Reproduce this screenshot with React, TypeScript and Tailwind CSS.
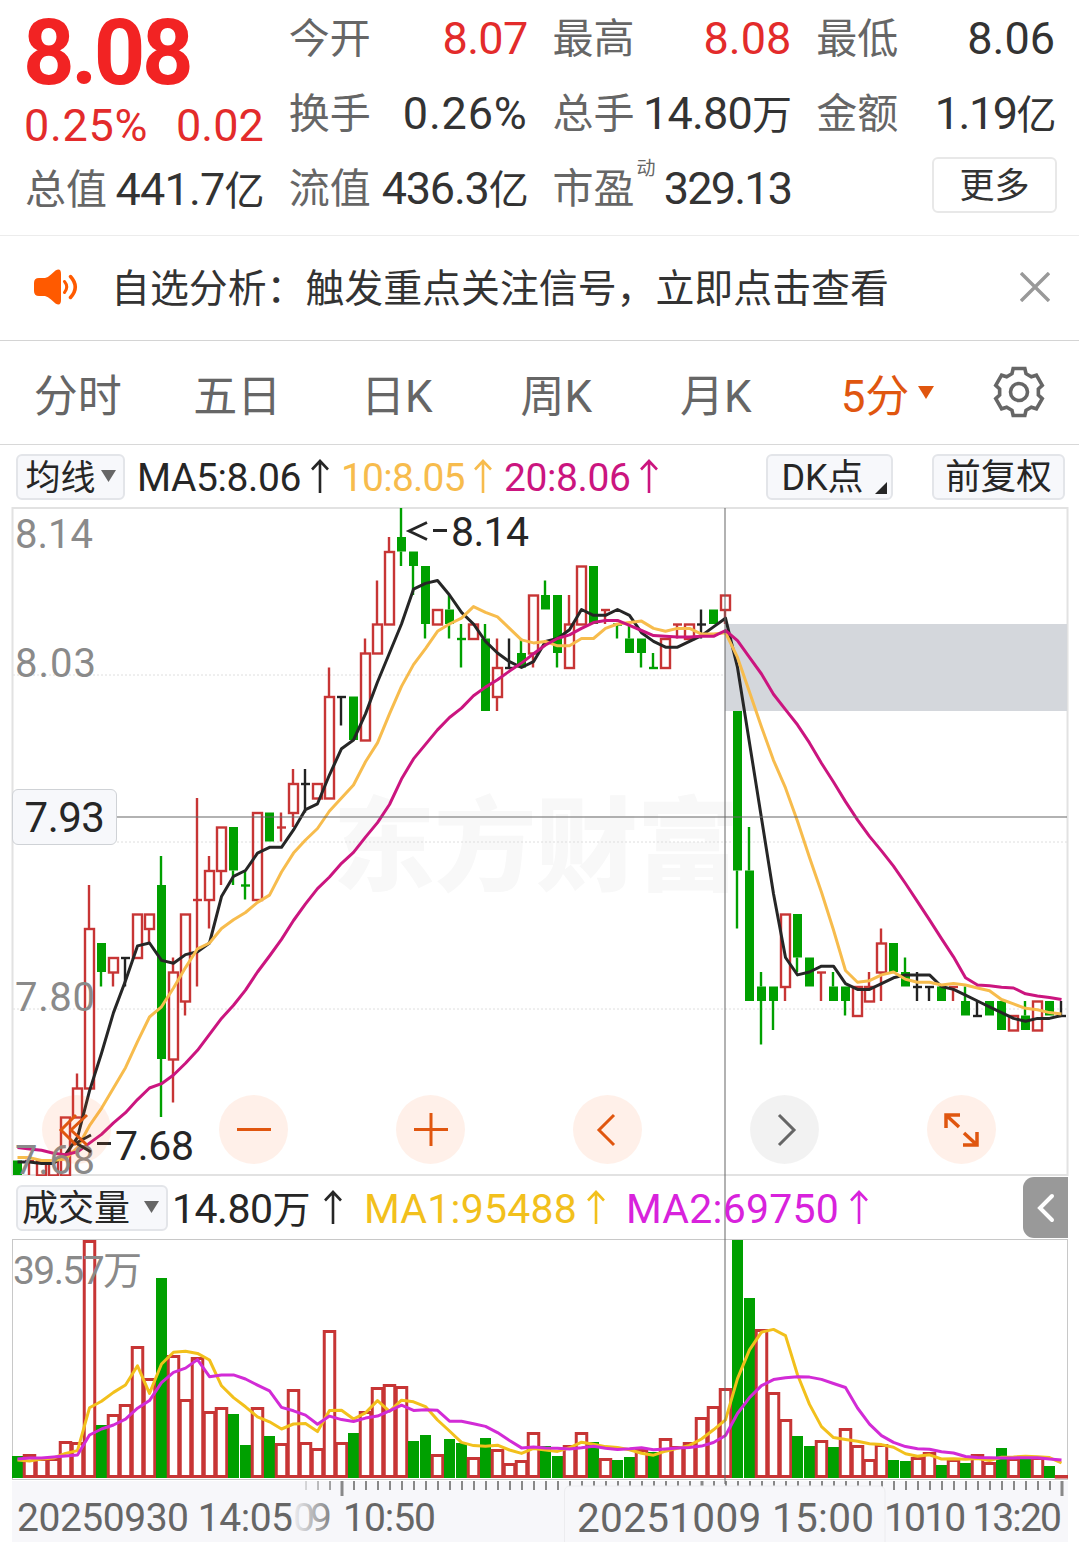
import type { ReactNode } from "react";
import clsx from "clsx";

type Tone = "r" | "g" | "k";
// [tone, high, body top, body bottom, low], counted in ticks of 0.01 below 8.14
type Candle = [Tone, number, number, number, number];

const candles: Candle[] = [
  ["g", 45, 45, 46, 46], ["r", 45, 45, 45, 46], ["r", 45, 45, 46, 46], ["r", 45, 45, 46, 46],
  ["r", 42, 42, 46, 46], ["r", 39, 40, 42, 42], ["r", 26, 29, 40, 40], ["g", 30, 30, 32, 33],
  ["r", 31, 31, 32, 33], ["k", 31, 31, 31, 33], ["r", 28, 28, 31, 31], ["r", 28, 28, 29, 30],
  ["g", 24, 26, 38, 42], ["r", 31, 32, 38, 41], ["r", 28, 28, 34, 35], ["r", 20, 27, 27, 33],
  ["r", 24, 25, 27, 29], ["r", 22, 22, 25, 26], ["g", 22, 22, 25, 26], ["g", 25, 26, 26, 27],
  ["r", 21, 21, 27, 27], ["g", 21, 21, 23, 23], ["r", 21, 22, 22, 23], ["r", 18, 19, 21, 22],
  ["k", 18, 19, 19, 21], ["r", 19, 19, 20, 20], ["r", 11, 13, 20, 20], ["k", 13, 13, 13, 15],
  ["g", 13, 13, 16, 16], ["r", 9, 10, 16, 16], ["r", 5, 8, 10, 10], ["r", 2, 3, 8, 8],
  ["g", 0, 2, 3, 4], ["g", 3, 3, 4, 6], ["g", 4, 4, 8, 9], ["r", 7, 7, 8, 8],
  ["g", 6, 7, 8, 9], ["g", 8, 9, 9, 11], ["r", 8, 8, 9, 9], ["g", 8, 9, 14, 14],
  ["r", 9, 11, 13, 14], ["k", 9, 11, 11, 11], ["g", 9, 10, 11, 11], ["r", 6, 6, 10, 11],
  ["g", 5, 6, 7, 7], ["g", 6, 6, 10, 11], ["r", 6, 8, 11, 11], ["r", 4, 4, 8, 8],
  ["g", 4, 4, 8, 8], ["r", 7, 7, 7, 8], ["g", 8, 8, 8, 9], ["g", 8, 9, 10, 10],
  ["g", 9, 9, 10, 11], ["g", 10, 11, 11, 11], ["r", 9, 9, 11, 11], ["r", 8, 8, 8, 9],
  ["r", 8, 8, 9, 9], ["k", 7, 8, 8, 9], ["g", 7, 7, 8, 8], ["r", 6, 6, 7, 8],
  ["g", 14, 14, 25, 29], ["g", 22, 25, 34, 34], ["g", 32, 33, 34, 37], ["g", 33, 33, 34, 36],
  ["r", 28, 28, 33, 34], ["g", 28, 28, 31, 32], ["g", 31, 31, 33, 33], ["r", 32, 32, 32, 34],
  ["g", 32, 33, 34, 34], ["g", 33, 33, 34, 35], ["r", 33, 33, 35, 35], ["r", 32, 33, 34, 34],
  ["r", 29, 30, 32, 34], ["g", 30, 30, 32, 32], ["g", 31, 32, 33, 33], ["k", 32, 33, 33, 34],
  ["k", 33, 33, 33, 34], ["g", 33, 33, 34, 34], ["r", 33, 33, 33, 34], ["g", 33, 34, 35, 35],
  ["k", 34, 35, 35, 35], ["g", 34, 34, 35, 35], ["g", 34, 34, 36, 36], ["r", 35, 35, 36, 36],
  ["g", 34, 35, 36, 36], ["r", 34, 34, 36, 36], ["g", 34, 34, 35, 35], ["k", 34, 35, 35, 35],
];

const volumes = [
  22, 24, 20, 20, 37, 36, 238, 53, 64, 74,
  132, 100, 200, 123, 79, 121, 67, 71, 64, 33,
  71, 42, 35, 89, 36, 30, 148, 36, 45, 67,
  91, 94, 92, 37, 43, 24, 39, 35, 21, 40,
  29, 15, 18, 46, 32, 22, 33, 46, 36, 20,
  18, 21, 29, 26, 40, 32, 36, 61, 72, 90,
  238, 180, 149, 86, 59, 42, 32, 38, 31, 50,
  33, 19, 34, 18, 17, 21, 26, 13, 19, 15,
  24, 16, 30, 20, 19, 21, 12, 3,
];

const fallingVolumes = new Set([
  0, 7, 12, 18, 19, 21, 28, 33, 34, 36, 37, 39, 44, 45, 48, 50, 51, 53,
  60, 61, 65, 66, 68, 73, 74, 77, 79, 82, 84, 86,
]);

const TONES: Record<Tone, string> = { r: "#c73535", g: "#00a000", k: "#222222" };

const xOf = (i: number) => 17 + i * 12;
const yOf = (tick: number) => tick * 14.5;

// the first bars need history that is not on screen, so their averages are given
function movingAverage(values: number[], period: number, head: number[]) {
  return values.map((_, i) => {
    if (i < head.length) return head[i];
    const part = values.slice(i - period + 1, i + 1);
    return part.reduce((a, b) => a + b, 0) / period;
  });
}

function toPoints(values: number[], y: (v: number) => number) {
  return values.map((v, i) => `${xOf(i) + 0.5},${y(v).toFixed(1)}`).join(" ");
}

const closes = candles.map(([tone, , top, bottom]) => (tone === "g" ? bottom : top));
const ma5 = movingAverage(closes, 5, [45.1, 45.1, 45.2, 45.2]);
const ma10 = movingAverage(closes, 10, [44.8, 44.8, 45, 45, 44.9, 44.1, 42.6, 41.4, 40]);
const ma20 = movingAverage(closes, 20, [
  44.1, 44.2, 44.3, 44.5, 44.6, 44.4, 43.8, 43.2, 42.4, 41.7, 40.8, 40, 39.7, 39.1, 38.3, 37.4, 36.3, 35.2, 34.3,
]);
const volMa5 = movingAverage(volumes, 5, [18, 17, 19, 20]);
const volMa10 = movingAverage(volumes, 10, [19, 20, 20, 21, 22, 23, 43, 49, 53]);

const gearPoints = Array.from({ length: 6 })
  .flatMap((_, k) =>
    [[-21, 19.6], [-14, 24.2], [14, 24.2], [21, 19.6]].map(([deg, r]) => {
      const a = ((k * 60 + deg) * Math.PI) / 180;
      return `${(26 + r * Math.sin(a)).toFixed(2)},${(26 - r * Math.cos(a)).toFixed(2)}`;
    })
  )
  .join(" ");

function Stat({ label, sup, children, className }: { label: string; sup?: string; children: ReactNode; className?: string }) {
  return (
    <div className="flex h-[75px] items-center justify-between whitespace-nowrap">
      <span className="relative pt-[2px] text-[41px] text-[#666]">
        {label}
        {sup && <span className="absolute left-[84px] top-[-8px] text-[19px] leading-none">{sup}</span>}
      </span>
      <span className={clsx("-mr-[1px] text-[45px]", className ?? "text-[#333]")}>{children}</span>
    </div>
  );
}

function Unit({ children }: { children: string }) {
  return <span className="text-[40px]">{children}</span>;
}

function UpArrow({ className }: { className?: string }) {
  return (
    <svg className={clsx("shrink-0", className)} width="20" height="36" viewBox="0 0 20 36" fill="none" stroke="currentColor" strokeWidth="2.6">
      <path d="M10 34V2M2 10.5L10 2l8 8.5" />
    </svg>
  );
}

function RoundButton({ muted, children }: { muted?: boolean; children: ReactNode }) {
  return (
    <button
      className={clsx(
        "flex size-[69px] items-center justify-center rounded-full",
        muted ? "bg-[#000]/5 text-[#666]" : "bg-[#ff6a20]/10 text-[#e0560f]"
      )}
    >
      <svg width="40" height="40" viewBox="0 0 40 40" fill="none" stroke="currentColor" strokeWidth="3">
        {children}
      </svg>
    </button>
  );
}

function CandleShape({ candle, x }: { candle: Candle; x: number }) {
  const [tone, high, top, bottom, low] = candle;
  const color = TONES[tone];
  const flat = top === bottom;
  return (
    <g stroke={color} strokeWidth="2.4" fill="none">
      {high < top && <path d={`M${x} ${yOf(high)}V${yOf(top)}`} />}
      {low > bottom && <path d={`M${x} ${yOf(bottom)}V${yOf(low)}`} />}
      {flat && <path d={`M${x - 4} ${yOf(top) + 0.5}h9`} />}
      {!flat && tone === "g" && (
        <rect x={x - 4} y={yOf(top)} width="9" height={yOf(bottom) - yOf(top)} fill={color} stroke="none" />
      )}
      {!flat && tone === "r" && <rect x={x - 4} y={yOf(top) + 0.5} width="9" height={yOf(bottom) - yOf(top)} />}
    </g>
  );
}

function PriceChart() {
  return (
    <svg className="block overflow-visible" width="1079" height="668" viewBox="0 0 1079 668">
      <clipPath id="plot">
        <rect x="12" y="0" width="1056" height="668" />
      </clipPath>
      <text x="333" y="375" textLength="406" fontSize="102" fontWeight="900" fill="#f8f8f8">东方财富</text>
      <path d="M13 167H1067M13 334H1067M13 501H1067" stroke="#dedede" strokeDasharray="2 2" />
      <rect x="12.5" y="0" width="1055" height="667" fill="none" stroke="#e2e2e2" strokeWidth="2" />
      <rect x="725" y="116" width="342" height="87" fill="#d4d7dc" />
      <g clipPath="url(#plot)">
        {candles.map((c, i) => (
          <CandleShape key={i} candle={c} x={xOf(i)} />
        ))}
        <g fill="none" strokeWidth="3" strokeLinejoin="round">
          <polyline points={toPoints(ma5, yOf)} stroke="#262626" />
          <polyline points={toPoints(ma10, yOf)} stroke="#f7bc4d" />
          <polyline points={toPoints(ma20, yOf)} stroke="#cb157f" />
        </g>
      </g>
      <g fontSize="40" fill="#8a8a8a">
        <text x="15" y="40" textLength="78">8.14</text>
        <text x="15" y="169" textLength="81">8.03</text>
        <text x="15" y="503" textLength="80">7.80</text>
        <text x="15" y="666" textLength="80">7.68</text>
      </g>
      <g fontSize="41" fill="#262626">
        <path d="M427 14.500l-18 8.500 18 8.500M433 22.500h14" fill="none" stroke="#262626" strokeWidth="2.8" />
        <text x="451" y="38" textLength="78">8.14</text>
        <path d="M91 627l-15 8 15 9M97 635.500h14" fill="none" stroke="#262626" strokeWidth="2.8" />
        <text x="115" y="652" textLength="79">7.68</text>
      </g>
    </svg>
  );
}

function VolumeChart() {
  return (
    <svg className="block" width="1079" height="242" viewBox="0 0 1079 242">
      <rect x="12.5" y="0.5" width="1055" height="240" fill="none" stroke="#c8c8c8" />
      <svg x="12" y="0" width="1056" height="242" viewBox="12 0 1056 242">
        {volumes.map((h, i) =>
          fallingVolumes.has(i) ? (
            <rect key={i} x={xOf(i) - 5} y={239 - h} width="11" height={h} fill="#00a000" />
          ) : (
            <rect
              key={i}
              x={xOf(i) - 4.75}
              y={240.5 - h}
              width="10.5"
              height={Math.max(h - 3, 0.5)}
              fill="#fff"
              stroke="#c73535"
              strokeWidth="3"
            />
          )
        )}
        <g fill="none" strokeWidth="3" strokeLinejoin="round">
          <polyline points={toPoints(volMa5, (v) => 239 - v)} stroke="#f2c01c" />
          <polyline points={toPoints(volMa10, (v) => 239 - v)} stroke="#d22bd6" />
        </g>
      </svg>
      <text x="13" y="45" fontSize="39" textLength="129" fill="#8a8a8a">39.57万</text>
    </svg>
  );
}

function TimeAxis() {
  const ticks = Array.from({ length: 64 }, (_, i) => 306 + i * 12);
  return (
    <svg className="block" width="1079" height="61" viewBox="0 0 1079 61">
      <defs>
        <linearGradient id="fade">
          <stop offset="0" stopColor="#f7f7fa" />
          <stop offset="1" stopColor="#f7f7fa" stopOpacity="0" />
        </linearGradient>
      </defs>
      <rect x="12" y="0" width="1056" height="61" fill="#f7f7fa" />
      {ticks.map((x) => {
        const major = x === 342 || x === 702 || x === 1062;
        return <rect key={x} x={major ? x - 1.5 : x - 1} y="0" width={major ? 3 : 2} height={major ? 15 : 9} fill="#888" />;
      })}
      <g fontSize="39" fill="#666">
        <text x="293" y="50" textLength="39">09</text>
        <text x="343" y="50" textLength="93">10:50</text>
        <rect x="290" y="0" width="52" height="61" fill="url(#fade)" />
        <text x="17" y="50" textLength="276">20250930 14:05</text>
        <text x="884" y="50" textLength="178">1010 13:20</text>
      </g>
      <path d="M564.500 62V11q0-6 6-6H879q6 0 6 6V62" fill="#f7f7fa" stroke="#ececef" />
      <text x="577" y="51" fontSize="40.500" fill="#666" textLength="297">20251009 15:00</text>
    </svg>
  );
}

export default function App() {
  return (
    <div className="w-[1079px] h-[1542px] overflow-hidden bg-white leading-none font-['Roboto','Noto_Sans_CJK_SC',sans-serif]">
      {/* Quote summary */}
      <header className="grid h-[236px] grid-cols-4 gap-x-[26px] border-b border-[#ececec] px-[25px] pt-[1px]">
        <div className="whitespace-nowrap">
          <div className="-ml-[2px] flex h-[98px] items-center pt-[8px] text-[90px] font-bold tracking-[-3.5px] text-[#f22323]">8.08</div>
          <div className="-mr-[1px] flex h-[53px] items-center justify-between text-[45px] text-[#e32b2b]">
            <span className="-ml-[1px] tracking-[0.7px]">0.25%</span>
            <span>0.02</span>
          </div>
          <Stat label="总值" className="tracking-[-0.8px] text-[#333]">441.7<Unit>亿</Unit></Stat>
        </div>
        <div>
          <Stat label="今开" className="tracking-[-0.7px] text-[#e32b2b]">8.07</Stat>
          <Stat label="换手" className="tracking-[0.8px] text-[#333]">0.26%</Stat>
          <Stat label="流值" className="tracking-[-1.2px] text-[#333]">436.3<Unit>亿</Unit></Stat>
        </div>
        <div>
          <Stat label="最高" className="text-[#e32b2b]">8.08</Stat>
          <Stat label="总手" className="tracking-[-0.8px] text-[#333]">14.80<Unit>万</Unit></Stat>
          <Stat label="市盈" sup="动" className="tracking-[-1.8px] text-[#333]">329.13</Stat>
        </div>
        <div>
          <Stat label="最低">8.06</Stat>
          <Stat label="金额" className="tracking-[-1.5px] text-[#333]">1.19<Unit>亿</Unit></Stat>
          <div className="flex justify-end pt-[6px]">
            <button className="-mr-[3px] h-[56px] w-[125px] rounded-md border-2 border-[#e8e8e8] pt-[2px] text-[35px] text-[#333]">更多</button>
          </div>
        </div>
      </header>

      {/* Notice */}
      <div className="flex h-[105px] items-center border-b border-[#d4d4d4] pl-[34px] pr-[29px]">
        <svg className="-mt-[2px]" width="44" height="36" viewBox="0 0 44 36" fill="none" stroke="#ff5a00" strokeLinecap="round">
          <path d="M0 14Q0 9 5 9h6Q14 8.500 17 5.500L21.500 1.500Q27 -1.500 27 5V31Q27 37.500 21.500 34.500L17 30.500Q14 27.500 11 27H5Q0 27 0 22Z" fill="#ff5a00" stroke="none" />
          <path d="M30.500 12.500Q35 18 30.500 23.500" strokeWidth="3" />
          <path d="M36.500 7.500Q46 18 36.500 28.500" strokeWidth="3.500" />
        </svg>
        <span className="ml-[33px] whitespace-nowrap pt-[3px] text-[38.9px] text-[#333]">自选分析：触发重点关注信号，立即点击查看</span>
        <svg className="-mt-[2px] ml-auto" width="30" height="30" viewBox="0 0 30 30" stroke="#999" strokeWidth="3.400">
          <path d="M1 1L29 29M29 1L1 29" />
        </svg>
      </div>

      {/* Period tabs */}
      <nav className="flex h-[104px] items-center border-b border-[#d8d8d8] text-[44px] text-[#666]">
        <div className="-ml-[2px] flex pt-[8px]">
          {["分时", "五日", "日K", "周K", "月K"].map((tab) => (
            <button key={tab} className="w-[159.5px]">{tab}</button>
          ))}
          <button className="flex w-[184px] items-center justify-center gap-[9px] text-[#e0560f]">
            5分
            <svg width="16" height="14" viewBox="0 0 16 14" className="-mt-[7px]" fill="currentColor"><path d="M0 0H16L8 13Z" /></svg>
          </button>
        </div>
        <svg className="-mt-[1px] ml-[13px]" width="52" height="52" viewBox="0 0 52 52" fill="none" stroke="#666" strokeWidth="3.600">
          <polygon points={gearPoints} />
          <circle cx="26" cy="26" r="8.500" />
        </svg>
      </nav>

      <main className="relative">
        {/* Moving average legend */}
        <div className="flex h-[63px] items-center whitespace-nowrap pl-[16px] pr-[14px] text-[39px] text-[#262626]">
          <button className="flex h-[46px] w-[109px] items-center justify-center gap-[5px] rounded-md border-2 border-[#e3e5e9] bg-[#f7f8fb] text-[35px]">
            <span className="pt-[3px]">均线</span>
            <svg width="15" height="13" viewBox="0 0 15 13" fill="#666"><path d="M0 0H15L7.500 12Z" /></svg>
          </button>
          <span className="ml-[12px] w-[173px] pt-[3px] tracking-[-0.4px]">MA5:8.06</span>
          <UpArrow />
          <span className="ml-[11px] w-[132px] pt-[3px] tracking-[-0.8px] text-[#f7bc4d]">10:8.05</span>
          <UpArrow className="text-[#f7bc4d]" />
          <span className="ml-[11px] w-[135px] pt-[3px] tracking-[-0.4px] text-[#cb157f]">20:8.06</span>
          <UpArrow className="text-[#cb157f]" />
          <button className="relative ml-auto h-[46px] w-[127px] rounded-md border-2 border-[#e3e5e9] bg-[#f7f8fb] pr-[14px] pt-[3px] text-[36px]">
            DK点
            <svg className="absolute bottom-[4px] right-[4px]" width="12" height="12" viewBox="0 0 12 12" fill="#262626"><path d="M12 0V12H0Z" /></svg>
          </button>
          <button className="ml-[39px] h-[46px] w-[133px] rounded-md border-2 border-[#e3e5e9] bg-[#f7f8fb] pt-[3px] text-[35.5px]">前复权</button>
        </div>

        <div className="relative">
          <PriceChart />
          <div className="absolute left-[42px] top-[587px] flex gap-[108px]">
            <RoundButton><path d="M30 5L14 20 30 35M19 5L4 20 19 35" /></RoundButton>
            <RoundButton><path d="M3 19.500H37" /></RoundButton>
            <RoundButton><path d="M3 19.500H37M20 3V36" /></RoundButton>
            <RoundButton><path d="M26 5L11 20 26 35" /></RoundButton>
            <RoundButton muted><path d="M14 5L29 20 14 35" /></RoundButton>
            <RoundButton><path d="M4 18V5H18M4 5L17 17M35 22V35H21M35 35L22 23" strokeWidth="3.500" /></RoundButton>
          </div>
          <div className="absolute left-[13px] top-[308px] h-[2px] w-[1054px] bg-[#666]/50" />
          <div className="absolute left-[12px] top-[281px] flex h-[56px] w-[105px] items-center justify-center rounded-md border border-[#cfd2d6] bg-[#f7f8fb] pt-[2px] text-[42px] tracking-[-0.5px] text-[#262626]">
            7.93
          </div>
        </div>

        {/* Volume legend */}
        <div className="flex h-[63px] items-center whitespace-nowrap pl-[16px] pr-[11px] text-[41px]">
          <button className="flex h-[46px] w-[152px] items-center justify-center gap-[14px] rounded-md border-2 border-[#e3e5e9] bg-[#f7f8fb] pr-[3px] text-[36px] text-[#262626]">
            <span className="pt-[3px]">成交量</span>
            <svg width="15" height="13" viewBox="0 0 15 13" fill="#666"><path d="M0 0H15L7.500 12Z" /></svg>
          </button>
          <span className="ml-[4px] w-[151px] pt-[3px] tracking-[-0.5px] text-[#262626]">14.80<span className="text-[38px]">万</span></span>
          <UpArrow className="text-[#262626]" />
          <span className="ml-[21px] w-[222px] pt-[3px] tracking-[0.2px] text-[#f2c01c]">MA1:95488</span>
          <UpArrow className="text-[#f2c01c]" />
          <span className="ml-[20px] w-[223px] pt-[3px] tracking-[0.2px] text-[#d822dc]">MA2:69750</span>
          <UpArrow className="text-[#d822dc]" />
          <button className="ml-auto flex h-[61px] w-[45px] items-center justify-center rounded-l-[11px] bg-[#999]">
            <svg width="18" height="30" viewBox="0 0 18 30" fill="none" stroke="#fff" strokeWidth="4" strokeLinecap="round"><path d="M15 3L3 15 15 27" /></svg>
          </button>
        </div>

        <VolumeChart />
        <TimeAxis />

        <div className="absolute left-[724px] top-[63px] h-[976px] w-[2px] bg-[#666]/50" />
      </main>
    </div>
  );
}
